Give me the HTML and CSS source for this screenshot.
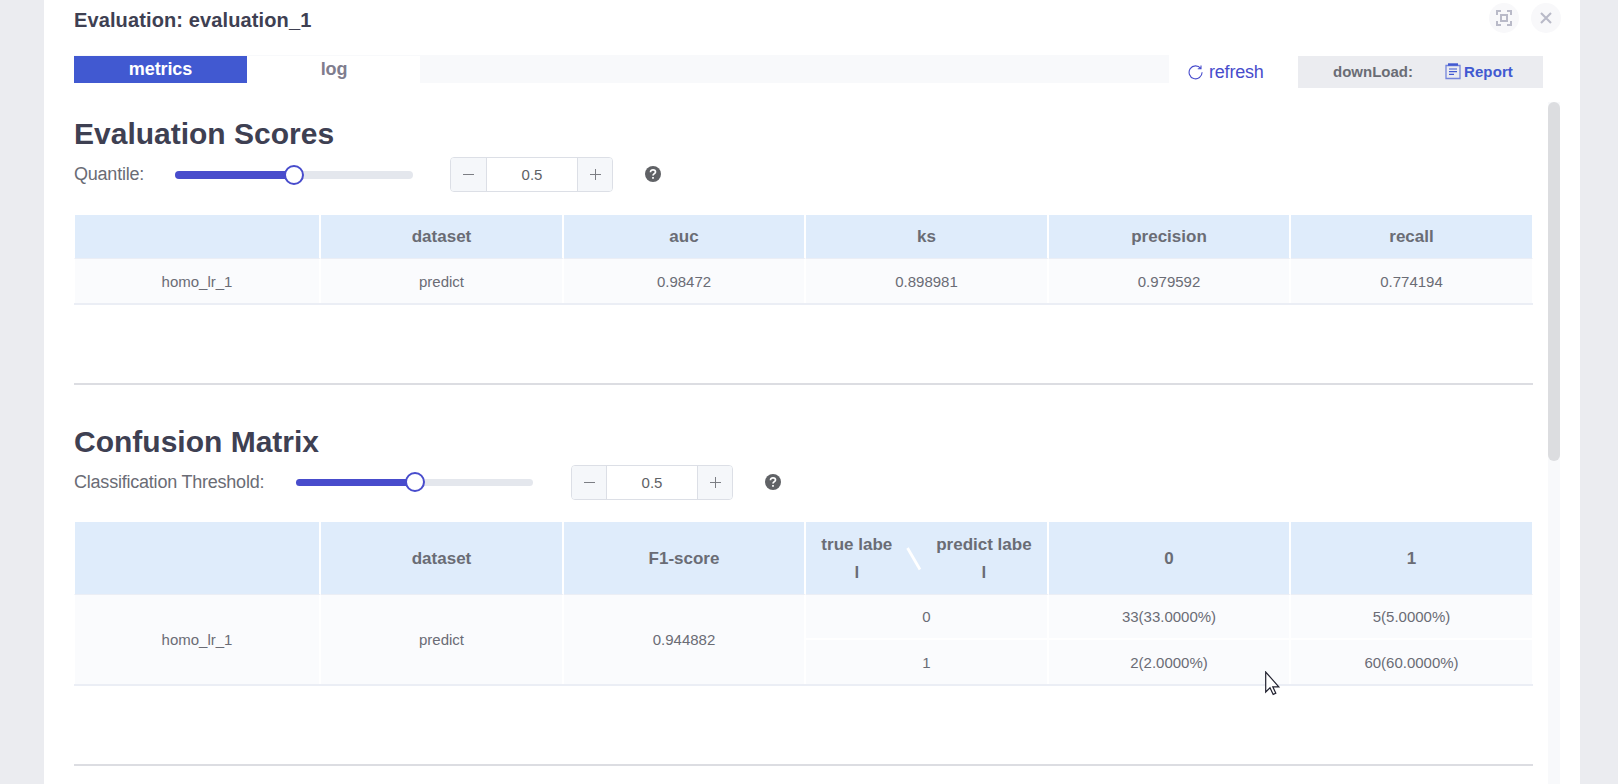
FILE: index.html
```html
<!DOCTYPE html>
<html lang="en">
<head>
  <meta charset="UTF-8">
  <meta name="viewport" content="width=device-width, initial-scale=1.0">
  <title>Evaluation</title>
  <link rel="stylesheet" href="styles.css">
</head>
<body>
  <div class="dialog">
    <div class="dialog-header">
      <h2 class="title">Evaluation: evaluation_1</h2>
      <div class="header-buttons">
        <button class="round-btn">
          <svg width="16" height="16" viewBox="0 0 16 16" fill="none" stroke="#b9bac8" stroke-width="2">
            <path d="M1 5V1h4M11 1h4v4M15 11v4h-4M5 15H1v-4M5 5h6v6H5z"/>
          </svg>
        </button>
        <button class="round-btn">
          <svg width="12" height="12" viewBox="0 0 12 12" fill="none" stroke="#b9bac8" stroke-width="2.1">
            <path d="M1 1l10 10M11 1L1 11"/>
          </svg>
        </button>
      </div>
    </div>

    <div class="toolbar">
      <div class="tabs">
        <div class="tab active">metrics</div>
        <div class="tab">log</div>
      </div>
      <div class="refresh">
        <svg width="15" height="15" viewBox="0 0 15 15" fill="none" stroke="#484ccc" stroke-width="1.1">
          <path d="M14.1 7.3A6.5 6.5 0 1 1 12.7 3.3M13 .5v3.2H9.8"/>
        </svg>
        <span>refresh</span>
      </div>
      <div class="download">
        <span class="download-label">downLoad:</span>
        <span class="report">
          <svg width="16" height="17" viewBox="0 0 16 17" fill="none" stroke="#4159d1">
            <path d="M1 2.5h14v13H1z" stroke-opacity=".7" stroke-width="1.3"/>
            <path d="M3 1.5h10" stroke-width="2.4"/>
            <path d="M4 6h8M4 8.7h8M4 11.4h5" stroke-width="1.2"/>
          </svg>
          <b>Report</b>
        </span>
      </div>
    </div>

    <div class="content">
      <div class="panel">
        <section class="block">
          <h3 class="heading">Evaluation Scores</h3>
          <div class="controls">
            <span class="label">Quantile:</span>
            <div class="slider"><div class="bar"></div><div class="knob"></div></div>
            <div class="number">
              <span class="step"><svg width="11" height="11" viewBox="0 0 11 11"><path d="M0 5.5h11"/></svg></span>
              <span class="value">0.5</span>
              <span class="step"><svg width="11" height="11" viewBox="0 0 11 11"><path d="M0 5.5h11M5.5 0v11"/></svg></span>
            </div>
            <svg class="help" width="16" height="16" viewBox="0 0 16 16">
              <circle cx="8" cy="8" r="8"/>
              <path d="M5.5 6.2C5.5 4.5 6.6 3.8 8 3.8s2.5.8 2.5 2.2c0 1.6-2.5 1.7-2.5 3.5"/>
              <path d="M8 11v1.7"/>
            </svg>
          </div>
          <table class="scores">
            <colgroup>
              <col class="c1"><col class="c2"><col class="c3"><col class="c4"><col class="c5"><col class="c6">
            </colgroup>
            <tr>
              <th></th><th>dataset</th><th>auc</th><th>ks</th><th>precision</th><th>recall</th>
            </tr>
            <tr>
              <td class="first">homo_lr_1</td><td>predict</td><td>0.98472</td><td>0.898981</td><td>0.979592</td><td>0.774194</td>
            </tr>
          </table>
        </section>

        <section class="block matrix">
          <h3 class="heading">Confusion Matrix</h3>
          <div class="controls">
            <span class="label">Classification Threshold:</span>
            <div class="slider"><div class="bar"></div><div class="knob"></div></div>
            <div class="number">
              <span class="step"><svg width="11" height="11" viewBox="0 0 11 11"><path d="M0 5.5h11"/></svg></span>
              <span class="value">0.5</span>
              <span class="step"><svg width="11" height="11" viewBox="0 0 11 11"><path d="M0 5.5h11M5.5 0v11"/></svg></span>
            </div>
            <svg class="help" width="16" height="16" viewBox="0 0 16 16">
              <circle cx="8" cy="8" r="8"/>
              <path d="M5.5 6.2C5.5 4.5 6.6 3.8 8 3.8s2.5.8 2.5 2.2c0 1.6-2.5 1.7-2.5 3.5"/>
              <path d="M8 11v1.7"/>
            </svg>
          </div>
          <table class="scores">
            <colgroup>
              <col class="c1"><col class="c2"><col class="c3"><col class="c4"><col class="c5"><col class="c6">
            </colgroup>
            <tr class="tall">
              <th></th><th>dataset</th><th>F1-score</th>
              <th>
                <div class="split">
                  <span>true labe<br>l</span>
                  <svg width="16" height="24" viewBox="0 0 16 24"><path d="M1.5 1l12.5 21.5" stroke="#fff" stroke-width="2.8"/></svg>
                  <span>predict labe<br>l</span>
                </div>
              </th>
              <th>0</th><th>1</th>
            </tr>
            <tr>
              <td class="first" rowspan="2">homo_lr_1</td><td rowspan="2">predict</td><td rowspan="2">0.944882</td>
              <td class="sub">0</td><td class="sub">33(33.0000%)</td><td class="sub">5(5.0000%)</td>
            </tr>
            <tr>
              <td>1</td><td>2(2.0000%)</td><td>60(60.0000%)</td>
            </tr>
          </table>
        </section>
      </div>
      <div class="scrollbar"><div class="thumb"></div></div>
    </div>
  </div>

  <svg class="cursor" width="16" height="25" viewBox="0 0 16 25">
    <path d="M.7 1v20l4.3-4.2 3.2 6.6 2.6-1.2-3-6.4h6z" fill="#fff" stroke="#222230" stroke-width="1.2"/>
  </svg>
</body>
</html>
```
FILE: styles.css
```css
* {
  box-sizing: border-box;
}
body {
  margin: 0;
  height: 784px;
  overflow: hidden;
  background-color: #ebecf0;
  font-family: "Liberation Sans", Arial, sans-serif;
  color: #6a6c75;
}
.dialog {
  width: 1536px;
  height: 784px;
  margin-left: 44px;
  padding: 0 20px 0 30px;
  background-color: #fff;
  overflow: hidden;
}
.dialog-header {
  display: flex;
  justify-content: space-between;
  height: 55px;
}
.title {
  margin: 9px 0 0;
  font-size: 20px;
  line-height: 23px;
  letter-spacing: 0.12px;
  color: #3e4052;
}
.header-buttons {
  display: flex;
  gap: 12px;
  padding-top: 3px;
  margin-right: -1px;
}
.round-btn {
  display: flex;
  align-items: center;
  justify-content: center;
  width: 30px;
  height: 30px;
  padding: 0;
  border: none;
  border-radius: 50%;
  background-color: #f8f8fa;
}
.toolbar {
  display: flex;
  align-items: flex-start;
  height: 47px;
}
.tabs {
  display: flex;
  width: 1095px;
  height: 28px;
  background-color: #f8f9fb;
}
.tab {
  width: 173px;
  height: 27px;
  margin-top: 1px;
  padding-left: 1px;
  background-color: #fff;
  color: #7f7d8e;
  font-size: 18px;
  font-weight: bold;
  line-height: 26px;
  letter-spacing: -0.1px;
  text-align: center;
}
.tab.active {
  padding-left: 0;
  background-color: #4159d1;
  color: #fff;
}
.refresh {
  display: flex;
  align-items: center;
  gap: 6px;
  width: 110px;
  height: 32px;
  margin-top: 1px;
  margin-left: 19px;
  color: #484ccc;
  font-size: 18px;
  letter-spacing: -0.2px;
}
.download {
  display: flex;
  align-items: center;
  width: 245px;
  height: 32px;
  margin-top: 1px;
  padding-left: 35px;
  padding-bottom: 1px;
  background-color: #ebecf0;
  font-size: 15px;
  font-weight: bold;
}
.download-label {
  width: 112px;
}
.report {
  display: flex;
  align-items: center;
  gap: 3px;
  color: #4159d1;
  letter-spacing: 0.1px;
}
.content {
  display: flex;
  justify-content: space-between;
  height: 682px;
}
.panel {
  width: 1459px;
}
.block {
  height: 283px;
  border-bottom: 2px solid #dcdde2;
}
.heading {
  margin: 0;
  padding-top: 15px;
  font-size: 30px;
  line-height: 34px;
  color: #3e4052;
}
.controls {
  display: flex;
  align-items: center;
  height: 35px;
  margin-top: 6px;
}
.label {
  width: 101px;
  font-size: 18px;
  letter-spacing: -0.22px;
  white-space: nowrap;
}
.slider {
  position: relative;
  width: 238px;
  height: 8px;
  margin-right: 37px;
  border-radius: 4px;
  background-color: #e4e7ed;
}
.bar {
  width: 50%;
  height: 8px;
  border-radius: 4px;
  background-color: #484ccc;
}
.knob {
  position: absolute;
  left: 109px;
  top: -6px;
  width: 20px;
  height: 20px;
  border: 2px solid #484ccc;
  border-radius: 50%;
  background-color: #fff;
}
.number {
  display: flex;
  width: 163px;
  height: 35px;
  border: 1px solid #dcdfe6;
  border-radius: 4px;
  overflow: hidden;
}
.step {
  display: flex;
  align-items: center;
  justify-content: center;
  width: 36px;
  padding-bottom: 1px;
  background-color: #f5f7fa;
  border-right: 1px solid #dcdfe6;
}
.step:last-child {
  width: 35px;
  border-right: none;
  border-left: 1px solid #dcdfe6;
}
.step path {
  stroke: #7c7e84;
  stroke-width: 1;
}
.value {
  flex: 1;
  font-size: 15px;
  line-height: 34px;
  text-align: center;
  color: #606266;
}
.help {
  margin-left: 32px;
  margin-bottom: 1px;
}
.help circle {
  fill: #606266;
}
.help path {
  fill: none;
  stroke: #fff;
  stroke-width: 1.7;
}
.scores {
  width: 1459px;
  margin-top: 23px;
  table-layout: fixed;
  border-collapse: separate;
  border-spacing: 0;
  border-bottom: 2px solid #ebeef5;
}
.c1 {
  width: 247px;
}
.c2,
.c4 {
  width: 243px;
}
.c3,
.c5,
.c6 {
  width: 242px;
}
.scores th,
.scores td {
  padding: 0;
  border-right: 2px solid #fff;
  background-color: #fafbfd;
  font-size: 15px;
  text-align: center;
}
.scores th {
  height: 44px;
  background-color: #dfecfb;
  border-bottom: 1px solid #ebeef5;
  font-size: 17px;
  line-height: 28px;
}
.scores td {
  height: 44px;
}
.scores th:first-child,
.scores .first {
  border-left: 1px solid #fff;
}
.scores th:last-child,
.scores td:last-child {
  border-right-width: 1px;
}
.scores .tall th {
  height: 73px;
  padding-top: 1px;
}
.split {
  display: flex;
  align-items: center;
  justify-content: center;
  gap: 14px;
}
.matrix {
  height: 381px;
  padding-top: 25px;
}
.matrix .label {
  width: 222px;
}
.matrix .slider {
  width: 237px;
  height: 7px;
  margin-right: 38px;
}
.matrix .bar {
  height: 7px;
}
.matrix .knob {
  left: 108.5px;
  top: -7px;
}
.matrix .number {
  width: 162px;
}
.matrix .step {
  width: 35px;
}
.matrix .scores {
  margin-top: 22px;
}
.matrix .scores td {
  height: 44px;
}
.matrix .scores td.sub {
  height: 45px;
  border-bottom: 2px solid #fff;
}
.scrollbar {
  width: 12px;
  background-color: #f8f9fb;
}
.thumb {
  height: 359px;
  border-radius: 6px;
  background-color: #dcdde0;
}
.cursor {
  position: absolute;
  left: 1265px;
  top: 671px;
}
```
